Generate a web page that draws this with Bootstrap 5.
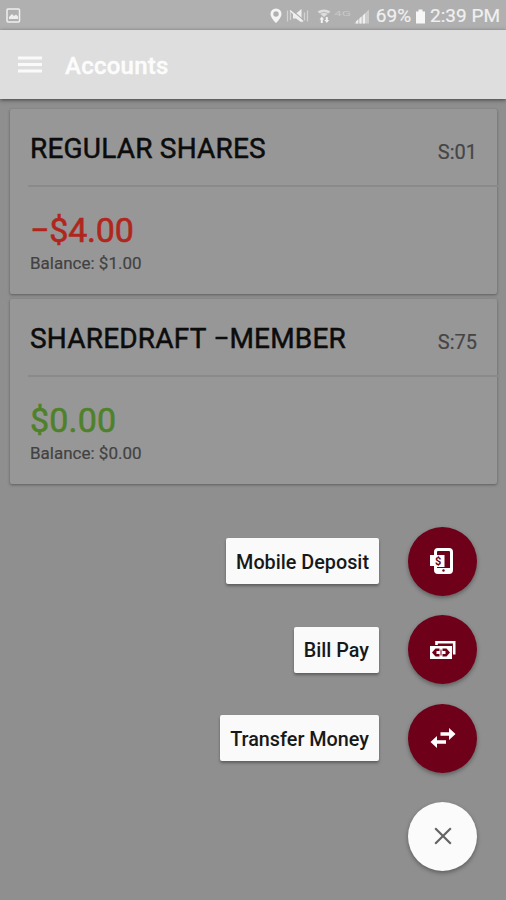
<!DOCTYPE html>
<html lang="en">
<head>
<meta charset="utf-8">
<meta name="viewport" content="width=device-width, initial-scale=1">
<title>Accounts</title>
<link href="https://cdn.jsdelivr.net/npm/bootstrap@5.3.0/dist/css/bootstrap.min.css" rel="stylesheet">
<style>
body{background:#8f8f8f;font-family:Roboto,"Liberation Sans",sans-serif;height:900px;overflow:hidden;line-height:1}
.status{height:30px;background:#b0b0b0;color:#f0f0f0;padding:1px 6px 0 6px}
.status svg{flex:none;display:block}
.status-text{font-size:19px;line-height:30px;white-space:nowrap;-webkit-text-stroke:.2px}
.appbar{height:69px;background:#dedede;padding:0 18px;box-shadow:0 1px 4px rgba(0,0,0,.55);z-index:1}
.appbar-title{font-size:24px;font-weight:500;color:#fcfcfc;line-height:30px;margin:2px 0 0 22px;letter-spacing:.25px;-webkit-text-stroke:.4px}
.accounts{padding:10px 9px 0 10px;gap:5px}
.account{height:185px;border:0;border-radius:2px;background:#979797;box-shadow:0 1px 3px rgba(0,0,0,.36);color:#0c0c0c}
.account-head{height:77px;padding:0 20px 0 20px}
.account-rule{height:2px;background:#8a8a8a;margin:-1px -2px -1px 18px}
.account-name{font-size:28px;line-height:32px;font-weight:400;margin:2px 0 0;white-space:nowrap;letter-spacing:.2px;-webkit-text-stroke:.5px}
.account-id{font-size:20px;line-height:24px;color:#454545;margin-top:8px;-webkit-text-stroke:.2px}
.account-body{padding:24px 20px 0}
.amount{font-size:34px;line-height:40px;-webkit-text-stroke:.6px}
.amount-neg{color:#b0261c;letter-spacing:-.2px}
.amount-pos{color:#4f812a;letter-spacing:.15px}
.balance{font-size:17px;line-height:20px;color:#424242;margin-top:3px;-webkit-text-stroke:.2px}
.speed-dial{right:29px;bottom:29.5px;gap:19.5px;z-index:2}
.dial-row{gap:29px}
.dial-label{height:46px;padding:3px 10px 0;border-radius:2px;background:#fafafa;color:#181818;font-size:19.8px;font-weight:500;white-space:nowrap;box-shadow:0 2px 3px rgba(0,0,0,.35)}
.dial-btn{width:69px;height:69px;background:#6e0019;box-shadow:0 2px 4px rgba(0,0,0,.35)}
.dial-close{background:#fbfbfb;margin-top:9.5px}
</style>
</head>
<body class="d-flex flex-column position-relative">
<div class="status d-flex align-items-center justify-content-between">
  <svg width="15" height="15" viewBox="0 0 15 15"><rect x="1" y="1" width="12.5" height="13" rx="1" fill="none" stroke="#eee" stroke-width="1.5"/><path d="M3 11V9l3-3 2 2 2-1.500 2 2V11z" fill="#eee"/></svg>
  <div class="d-flex align-items-center">
    <svg width="107" height="20" viewBox="0 0 107 20">
      <path fill="#f4f4f4" fill-rule="evenodd" d="M7 2.500A5.500 5.500 0 0 0 1.500 8C1.500 12 7 17 7 17s5.500-5 5.500-9A5.500 5.500 0 0 0 7 2.500zm0 2.800a2.700 2.700 0 1 1 0 5.400 2.700 2.700 0 0 1 0-5.400z"/>
      <path fill="none" stroke="#d2d2d2" stroke-width="1.300" d="M18.500 4.500v11M21.500 6v8M35.500 6.500v8M38.500 4.500v11"/>
      <path fill="#efefef" d="M24 7.500h3l5.500-4.500v13.500L27 12.500h-3z"/>
      <path stroke="#b0b0b0" stroke-width="1.200" d="M22 3.500l13 11"/>
      <path stroke="#f2f2f2" stroke-width="1.600" d="M21 4.500l13 11"/>
      <path fill="#dedede" d="M48.500 5.500q6.500-4 13 0L55 11z"/>
      <path fill="none" stroke="#b0b0b0" stroke-width=".8" d="M51 7.500q4-2.500 8 0"/>
      <path fill="#f2f2f2" d="M50.500 13.500l2.300-3 2.300 3h-1.300v3.500h-2v-3.500zM55.500 14h1.300v-3h2v3h1.300l-2.300 3z"/>
      <text x="65" y="10" font-size="8" fill="#c8c8c8" textLength="17" lengthAdjust="spacingAndGlyphs">4G</text>
      <path fill="#cdcdcd" d="M85 17.500L100 3.500v14z"/>
      <path fill="#efefef" d="M87 17.500V15.500l2-2v4zM90.500 17.500V12.500l2-2v7zM94 17.500V9.500l2-2v10z"/>
    </svg>
    <span class="status-text">69%</span>
    <svg class="ms-1 me-1" width="11" height="18" viewBox="0 0 11 18"><path fill="#f7f7f7" d="M3.500 2.500h4v2H10v12H1v-12h2.500z"/></svg>
    <span class="status-text">2:39 PM</span>
  </div>
</div>
<header class="appbar d-flex align-items-center position-relative">
  <svg width="25" height="20" viewBox="0 0 25 20"><path stroke="#fafafa" stroke-width="2.800" d="M0 3h24M0 9.500h24M0 16h24"/></svg>
  <h1 class="appbar-title">Accounts</h1>
</header>
<main class="accounts d-flex flex-column">
  <section class="card account">
    <div class="account-head d-flex align-items-center justify-content-between"><h2 class="account-name">REGULAR SHARES</h2><span class="account-id">S:01</span></div>
    <div class="account-rule"></div>
    <div class="account-body"><div class="amount amount-neg">−$4.00</div><div class="balance">Balance: $1.00</div></div>
  </section>
  <section class="card account">
    <div class="account-head d-flex align-items-center justify-content-between"><h2 class="account-name">SHAREDRAFT −MEMBER</h2><span class="account-id">S:75</span></div>
    <div class="account-rule"></div>
    <div class="account-body"><div class="amount amount-pos">$0.00</div><div class="balance">Balance: $0.00</div></div>
  </section>
</main>
<nav class="speed-dial position-absolute d-flex flex-column align-items-end">
  <div class="dial-row d-flex align-items-center">
    <span class="dial-label d-flex align-items-center">Mobile Deposit</span>
    <button class="dial-btn border-0 rounded-circle p-0 d-flex align-items-center justify-content-center" aria-label="Mobile Deposit">
      <svg width="28" height="28" viewBox="0 0 28 28"><rect x="6.500" y="2.500" width="16" height="23" rx="2.500" fill="none" stroke="#fff" stroke-width="3"/><path fill="#fff" d="M6 21h17v4H6z"/><path fill="#fff" d="M1 8h14.500v12H5v-1H1z"/><text x="6" y="17.500" font-size="11" font-weight="700" fill="#6e0019">$</text><circle cx="14.500" cy="23.500" r="1.200" fill="#6e0019"/></svg>
    </button>
  </div>
  <div class="dial-row d-flex align-items-center">
    <span class="dial-label d-flex align-items-center">Bill Pay</span>
    <button class="dial-btn border-0 rounded-circle p-0 d-flex align-items-center justify-content-center" aria-label="Bill Pay">
      <svg width="28" height="20" viewBox="0 0 28 20"><path fill="none" stroke="#fff" stroke-width="2.600" d="M7.500 5V2.300h17.700v11H24"/><path fill="#fff" d="M1 6h22v13H1z"/><path fill="#6e0019" fill-rule="evenodd" d="M3 12.500L6.500 8.500H10.500v2.500H7.500v3h3v2.500H6.500zM21 12.500l-3.500-4H13.500v2.500h3v3h-3v2.500h4z"/><path stroke="#6e0019" d="M12 9.500v6"/></svg>
    </button>
  </div>
  <div class="dial-row d-flex align-items-center">
    <span class="dial-label d-flex align-items-center">Transfer Money</span>
    <button class="dial-btn border-0 rounded-circle p-0 d-flex align-items-center justify-content-center" aria-label="Transfer Money">
      <svg width="26" height="20" viewBox="0 0 26 20"><path fill="#fff" d="M10.500 4.200H19V0l6.500 6-6.500 6V7.700h-8.500zM16 12.300H7V8L.5 14 7 20v-4.300h9z"/></svg>
    </button>
  </div>
  <button class="dial-btn dial-close border-0 rounded-circle p-0 d-flex align-items-center justify-content-center" aria-label="Close">
    <svg width="18" height="18" viewBox="0 0 18 18"><path stroke="#646464" stroke-width="2.200" d="M1.200 1.200l15.600 15.600M16.800 1.200L1.200 16.800"/></svg>
  </button>
</nav>
<script src="https://cdn.jsdelivr.net/npm/bootstrap@5.3.0/dist/js/bootstrap.bundle.min.js"></script>
</body>
</html>
